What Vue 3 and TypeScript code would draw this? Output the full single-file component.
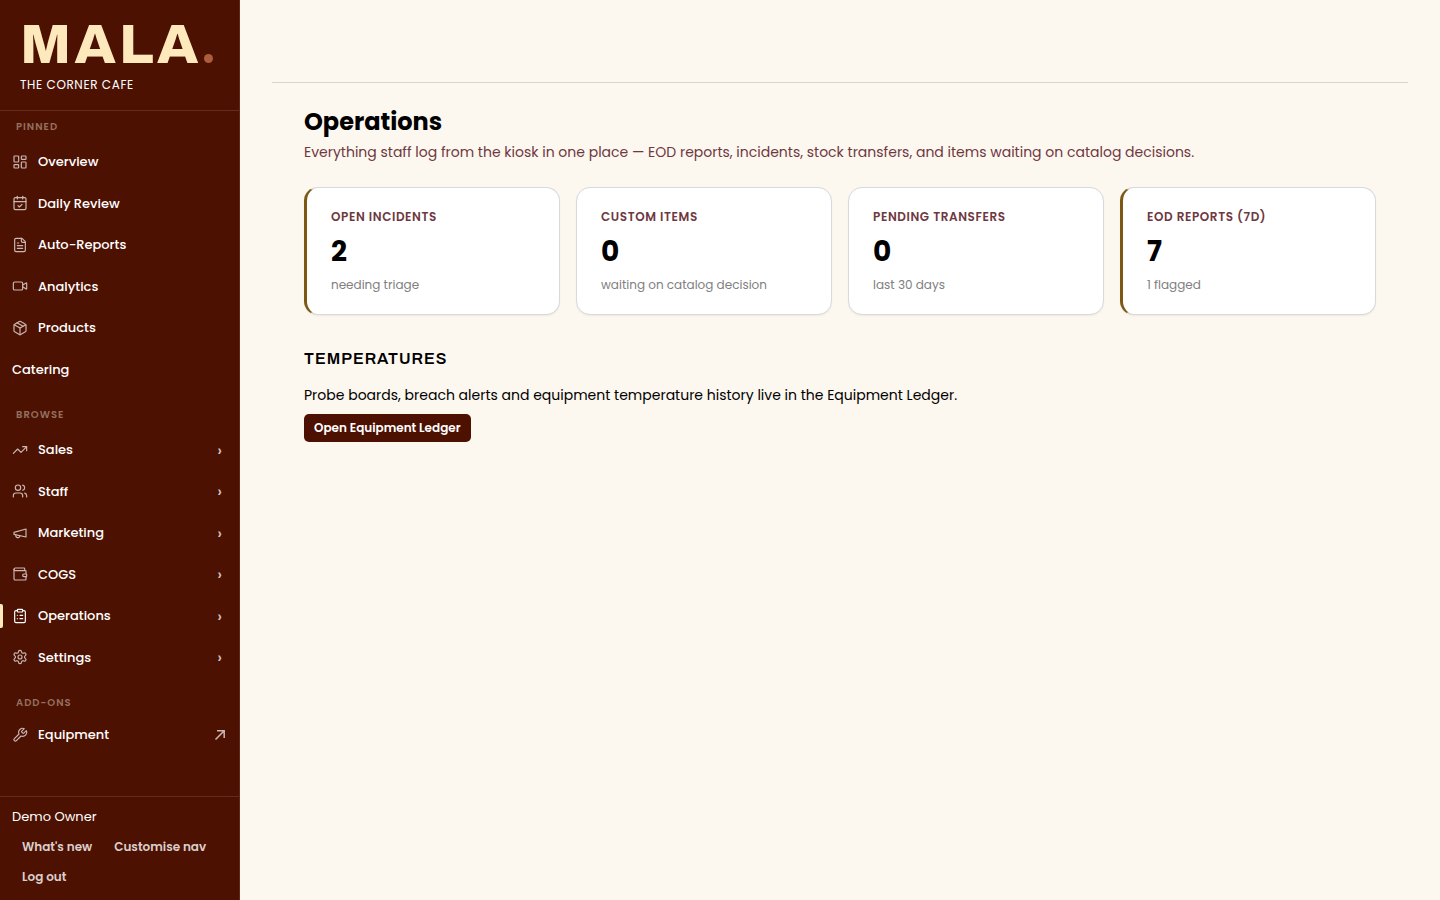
<script setup lang="ts">
interface NavItem {
  label: string
  icon?: string[]
  active?: boolean
}

interface Stat {
  label: string
  value: number
  note: string
  flagged: boolean
}

const pinned: NavItem[] = [
  {
    label: 'Overview',
    icon: ['M4 3h5a1 1 0 0 1 1 1v7a1 1 0 0 1-1 1H4a1 1 0 0 1-1-1V4a1 1 0 0 1 1-1z', 'M15 3h5a1 1 0 0 1 1 1v3a1 1 0 0 1-1 1h-5a1 1 0 0 1-1-1V4a1 1 0 0 1 1-1z', 'M15 12h5a1 1 0 0 1 1 1v7a1 1 0 0 1-1 1h-5a1 1 0 0 1-1-1v-7a1 1 0 0 1 1-1z', 'M4 16h5a1 1 0 0 1 1 1v3a1 1 0 0 1-1 1H4a1 1 0 0 1-1-1v-3a1 1 0 0 1 1-1z'],
  },
  {
    label: 'Daily Review',
    icon: ['M8 2v4', 'M16 2v4', 'M5 4h14a2 2 0 0 1 2 2v14a2 2 0 0 1-2 2H5a2 2 0 0 1-2-2V6a2 2 0 0 1 2-2z', 'M3 10h18', 'm9 16 2 2 4-4'],
  },
  {
    label: 'Auto-Reports',
    icon: ['M15 2H6a2 2 0 0 0-2 2v16a2 2 0 0 0 2 2h12a2 2 0 0 0 2-2V7Z', 'M14 2v4a2 2 0 0 0 2 2h4', 'M10 9H8', 'M16 13H8', 'M16 17H8'],
  },
  {
    label: 'Analytics',
    icon: ['m16 13 5.223 3.482a.5.5 0 0 0 .777-.416V7.870a.5.5 0 0 0-.752-.432L16 10.500', 'M4 6h10a2 2 0 0 1 2 2v8a2 2 0 0 1-2 2H4a2 2 0 0 1-2-2V8a2 2 0 0 1 2-2z'],
  },
  {
    label: 'Products',
    icon: ['M11 21.730a2 2 0 0 0 2 0l7-4A2 2 0 0 0 21 16V8a2 2 0 0 0-1-1.730l-7-4a2 2 0 0 0-2 0l-7 4A2 2 0 0 0 3 8v8a2 2 0 0 0 1 1.730z', 'M12 22V12', 'M3.300 7 12 12l8.700-5', 'm7.500 4.270 9 5.150'],
  },
  { label: 'Catering' },
]

const browse: NavItem[] = [
  { label: 'Sales', icon: ['m22 7-8.500 8.500-5-5L2 17', 'M16 7h6v6'] },
  {
    label: 'Staff',
    icon: ['M16 21v-2a4 4 0 0 0-4-4H6a4 4 0 0 0-4 4v2', 'M9 3a4 4 0 1 0 0 8 4 4 0 0 0 0-8z', 'M22 21v-2a4 4 0 0 0-3-3.870', 'M16 3.130a4 4 0 0 1 0 7.750'],
  },
  { label: 'Marketing', icon: ['m3 11 18-5v12L3 14v-3z', 'M11.600 16.800a3 3 0 1 1-5.800-1.600'] },
  {
    label: 'COGS',
    icon: ['M19 7V4a1 1 0 0 0-1-1H5a2 2 0 0 0 0 4h15a1 1 0 0 1 1 1v4h-3a2 2 0 0 0 0 4h3a1 1 0 0 0 1-1v-2a1 1 0 0 0-1-1', 'M3 5v14a2 2 0 0 0 2 2h15a1 1 0 0 0 1-1v-4'],
  },
  {
    label: 'Operations',
    active: true,
    icon: ['M9 2h6a1 1 0 0 1 1 1v2a1 1 0 0 1-1 1H9a1 1 0 0 1-1-1V3a1 1 0 0 1 1-1z', 'M16 4h2a2 2 0 0 1 2 2v14a2 2 0 0 1-2 2H6a2 2 0 0 1-2-2V6a2 2 0 0 1 2-2h2', 'M12 11h4', 'M12 16h4', 'M8 11h.01', 'M8 16h.01'],
  },
  {
    label: 'Settings',
    icon: ['M12.220 2h-.44a2 2 0 0 0-2 2v.18a2 2 0 0 1-1 1.730l-.43.25a2 2 0 0 1-2 0l-.15-.08a2 2 0 0 0-2.730.73l-.22.38a2 2 0 0 0 .73 2.730l.15.1a2 2 0 0 1 1 1.720v.51a2 2 0 0 1-1 1.740l-.15.09a2 2 0 0 0-.73 2.730l.22.38a2 2 0 0 0 2.730.73l.15-.08a2 2 0 0 1 2 0l.43.25a2 2 0 0 1 1 1.730V20a2 2 0 0 0 2 2h.44a2 2 0 0 0 2-2v-.18a2 2 0 0 1 1-1.730l.43-.25a2 2 0 0 1 2 0l.15.08a2 2 0 0 0 2.730-.73l.22-.39a2 2 0 0 0-.73-2.730l-.15-.08a2 2 0 0 1-1-1.740v-.5a2 2 0 0 1 1-1.740l.15-.09a2 2 0 0 0 .73-2.730l-.22-.38a2 2 0 0 0-2.730-.73l-.15.08a2 2 0 0 1-2 0l-.43-.25a2 2 0 0 1-1-1.730V4a2 2 0 0 0-2-2z', 'M12 9a3 3 0 1 0 0 6 3 3 0 0 0 0-6z'],
  },
]

const wrench = 'M14.700 6.300a1 1 0 0 0 0 1.400l1.600 1.600a1 1 0 0 0 1.400 0l3.770-3.770a6 6 0 0 1-7.940 7.940l-6.910 6.910a2.120 2.120 0 0 1-3-3l6.910-6.910a6 6 0 0 1 7.940-7.940l-3.760 3.760z'

const stats: Stat[] = [
  { label: 'Open incidents', value: 2, note: 'needing triage', flagged: true },
  { label: 'Custom items', value: 0, note: 'waiting on catalog decision', flagged: false },
  { label: 'Pending transfers', value: 0, note: 'last 30 days', flagged: false },
  { label: 'EOD reports (7d)', value: 7, note: '1 flagged', flagged: true },
]

const accountActions: string[] = ["What's new", 'Customise nav', 'Log out']
</script>

<template>
  <div class="shell">
    <aside class="sidebar">
      <header class="brand">
        <div class="logo">MALA<span class="logo-dot"></span></div>
        <div class="venue">The Corner Cafe</div>
      </header>

      <nav class="nav" aria-label="Main">
        <h2 class="nav-heading">Pinned</h2>
        <a v-for="item in pinned" :key="item.label" class="nav-item" href="#">
          <svg v-if="item.icon" class="icon" viewBox="0 0 24 24" aria-hidden="true">
            <path v-for="d in item.icon" :key="d" :d="d" />
          </svg>
          <span>{{ item.label }}</span>
        </a>

        <h2 class="nav-heading spaced">Browse</h2>
        <button v-for="item in browse" :key="item.label" type="button" class="nav-item" :class="{ active: item.active }">
          <svg class="icon" viewBox="0 0 24 24" aria-hidden="true">
            <path v-for="d in item.icon" :key="d" :d="d" />
          </svg>
          <span>{{ item.label }}</span>
          <span class="chevron" aria-hidden="true">›</span>
        </button>

        <h2 class="nav-heading spaced">Add-ons</h2>
        <a class="nav-item addon" href="#">
          <svg class="icon" viewBox="0 0 24 24" aria-hidden="true"><path :d="wrench" /></svg>
          <span>Equipment</span>
          <svg class="external" viewBox="0 0 12 12" aria-hidden="true"><path d="M1.500 10.500 10 2M3 1.800h7.200V9" /></svg>
        </a>
      </nav>

      <footer class="account">
        <div class="account-name">Demo Owner</div>
        <div class="account-actions">
          <button v-for="action in accountActions" :key="action" type="button" class="account-button">{{ action }}</button>
        </div>
      </footer>
    </aside>

    <main class="main">
      <div class="topbar"></div>
      <div class="content">
        <h1 class="title">Operations</h1>
        <p class="subtitle">Everything staff log from the kiosk in one place — EOD reports, incidents, stock transfers, and items waiting on catalog decisions.</p>

        <section class="stats" aria-label="Summary">
          <article v-for="stat in stats" :key="stat.label" class="card" :class="{ flagged: stat.flagged }">
            <h3 class="card-label">{{ stat.label }}</h3>
            <div class="card-value">{{ stat.value }}</div>
            <div class="card-note">{{ stat.note }}</div>
          </article>
        </section>

        <section class="temperatures">
          <h2 class="section-title">Temperatures</h2>
          <p class="section-text">Probe boards, breach alerts and equipment temperature history live in the Equipment Ledger.</p>
          <a class="primary" href="#">Open Equipment Ledger</a>
        </section>
      </div>
    </main>
  </div>
</template>

<style>
body {
  margin: 0;
  background: #fcf7ef;
}
</style>

<style scoped>
.shell {
  display: grid;
  grid-template-columns: 240px minmax(0, 1fr);
  min-height: 100vh;
  background: #fcf7ef;
  color: #000;
  font-family: Poppins, Inter, sans-serif;
  font-size: 14px;
  line-height: 1.5;
}

h1, h2, h3, p {
  margin: 0;
}

a {
  text-decoration: none;
}

button {
  border: 0;
  background: none;
  font-family: inherit;
  line-height: inherit;
  cursor: pointer;
}

.sidebar {
  display: flex;
  flex-direction: column;
  box-sizing: border-box;
  border-right: 1px solid #5e291b;
  background: #4d1102;
  color: #fff;
}

.brand {
  padding: 21px 20px 18px;
  border-bottom: 1px solid #632c1e;
}

.logo {
  display: flex;
  align-items: baseline;
  color: #fee9bd;
  font-family: Archivo, Inter, sans-serif;
  font-size: 56px;
  font-weight: 850;
  line-height: 48px;
  letter-spacing: 3px;
}

.logo-dot {
  flex-shrink: 0;
  width: 9px;
  height: 9px;
  margin-left: 2px;
  border-radius: 50%;
  background: #ad5c3c;
}

.venue {
  margin-top: 9px;
  font-size: 12px;
  line-height: 14px;
  letter-spacing: 0.05em;
  text-transform: uppercase;
}

.nav {
  flex: 1;
}

.nav-heading {
  padding: 8px 16px;
  color: #94705f;
  font-size: 10px;
  font-weight: 600;
  letter-spacing: 1px;
  text-transform: uppercase;
}

.nav-heading.spaced {
  padding-top: 16px;
}

.nav-item {
  position: relative;
  display: flex;
  align-items: center;
  gap: 10px;
  box-sizing: border-box;
  width: 100%;
  margin-bottom: 2px;
  padding: 10px 12px;
  color: #fff;
  font-size: 13px;
  font-weight: 500;
  text-align: left;
}

.nav-item.addon {
  padding-top: 7px;
}

.nav-item.active::before {
  content: '';
  position: absolute;
  top: 8px;
  bottom: 8px;
  left: 0;
  width: 3px;
  border-radius: 0 2px 2px 0;
  background: #fee9bd;
}

.icon {
  width: 16px;
  height: 16px;
  fill: none;
  stroke: #cab8b3;
  stroke-width: 1.75;
  stroke-linecap: round;
  stroke-linejoin: round;
}

.active .icon {
  stroke: #fff;
}

.chevron {
  margin-left: auto;
  margin-right: 5px;
  padding-top: 2px;
  color: #d2c4c0;
  font-size: 16px;
  line-height: 16px;
}

.external {
  width: 12px;
  height: 12px;
  margin-left: auto;
  margin-right: 1px;
  fill: none;
  stroke: #cab8b3;
  stroke-width: 1.5;
}

.account {
  padding: 10px 12px;
  border-top: 1px solid #632c1e;
}

.account-name {
  margin-bottom: 8px;
  font-size: 13px;
}

.account-actions {
  display: flex;
  flex-wrap: wrap;
  gap: 4px 2px;
}

.account-button {
  padding: 4px 10px;
  color: #dbcfcc;
  font-size: 12px;
  font-weight: 600;
}

.main {
  padding: 0 32px;
}

.topbar {
  height: 82px;
  border-bottom: 1px solid #d9d6d0;
}

.content {
  padding: 21px 32px;
}

.title {
  font-size: 24px;
  font-weight: 700;
}

.subtitle {
  margin-top: 2px;
  color: #6f383f;
}

.stats {
  display: grid;
  grid-template-columns: repeat(4, minmax(0, 1fr));
  gap: 16px;
  margin-top: 24px;
}

.card {
  padding: 20px 24px;
  border: 1px solid #d9d9dc;
  border-radius: 14px;
  background: #fff;
  box-shadow: 0 1px 2px rgba(0, 0, 0, 0.06);
}

.card.flagged {
  border-left: 3px solid #7d5814;
}

.card-label {
  color: #6f383f;
  font-size: 12px;
  font-weight: 600;
  letter-spacing: 0.05em;
  text-transform: uppercase;
}

.card-value {
  margin: 5px 0 3px;
  font-size: 28px;
  font-weight: 700;
}

.card-note {
  color: #808080;
  font-size: 12px;
}

.temperatures {
  margin-top: 32px;
}

.section-title {
  font-family: Archivo, "Liberation Sans", sans-serif;
  font-size: 16px;
  font-weight: 600;
  letter-spacing: 1px;
  text-transform: uppercase;
}

.section-text {
  margin: 14px 0 8px;
}

.primary {
  display: inline-block;
  padding: 5px 10px;
  border-radius: 5px;
  background: #4d1102;
  color: #fff;
  font-size: 12px;
  font-weight: 600;
}
</style>
